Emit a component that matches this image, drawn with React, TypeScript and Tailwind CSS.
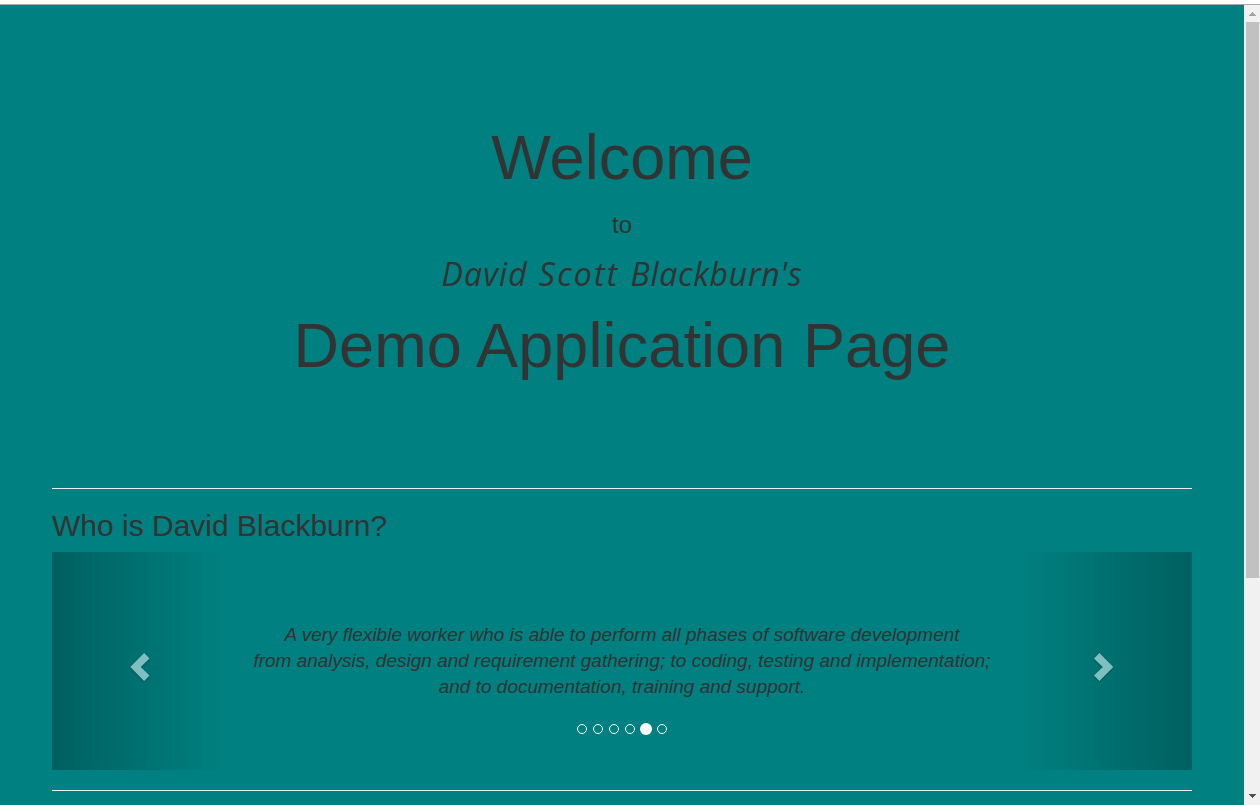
const slides = [0, 1, 2, 3, 4, 5];
const activeSlide = 4;

function Chevron({ flip = false }: { flip?: boolean }) {
  return (
    <svg
      width="20"
      height="28"
      viewBox="0 0 20 28"
      className="overflow-visible drop-shadow-[0_1px_1px_rgba(0,0,0,0.6)]"
    >
      <path
        fill="white"
        d={
          flip
            ? "M5.4 0 L19.3 14 L5.4 28 L0 22.6 L8.8 14 L0 5.4 Z"
            : "M14.1 0 L0.3 14 L14.1 28 L19.5 22.6 L10.7 14 L19.5 5.4 Z"
        }
      />
    </svg>
  );
}

function Scrollbar() {
  return (
    <div className="flex h-full w-4 shrink-0 flex-col items-center bg-[#f1f1f1]">
      <div className="flex h-[17px] w-full items-center justify-center pl-px">
        <svg width="7" height="4" viewBox="0 0 7 4" shapeRendering="crispEdges" className="fill-[#a3a3a3]">
          <path d="M3 0h1v1h1v1h1v1h1v1H0V3h1V2h1V1h1z" />
        </svg>
      </div>
      <div className="ml-px h-[556px] w-[13px] bg-[#c1c1c1]" />
      <div className="mt-auto flex h-[17px] w-full items-center justify-center pb-[2px] pl-px">
        <svg width="7" height="4" viewBox="0 0 7 4" shapeRendering="crispEdges" className="fill-[#505050]">
          <path d="M0 0h7v1H6v1H5v1H4v1H3V3H2V2H1V1H0z" />
        </svg>
      </div>
    </div>
  );
}

export default function App() {
  return (
    <div className="flex h-[805px] w-[1260px] flex-col overflow-hidden bg-white font-['Liberation_Sans',Arial,sans-serif] text-[#333333]">
      <div className="h-[5px] shrink-0 border-b border-[#a9a9a9] bg-white" />
      <div className="flex min-h-0 flex-1">
        <main className="flex-1 overflow-hidden bg-[#008080] px-[52px]">
          <header className="h-[483px] pt-[118px] text-center">
            <h1 className="text-[63px] leading-[69px]">Welcome</h1>
            <h3 className="mt-[20px] text-2xl leading-[26px]">to</h3>
            <h2 className="mt-[14px] flex h-11 justify-center gap-[11px] font-['Open_Sans','Noto_Sans',sans-serif] text-[32px] leading-[44px] italic">
              <span className="tracking-[1.1px]">David</span>
              <span className="tracking-[2.2px]">Scott</span>
              <span className="tracking-[0.7px]">Blackburn's</span>
            </h2>
            <h1 className="mt-[15px] text-[63px] leading-[69px] tracking-[0.1px]">Demo Application Page</h1>
          </header>
          <hr className="h-px border-0 bg-[#eeeeee]" />
          <section>
            <h2 className="mt-5 mb-[10px] text-[30px] leading-[33px]">Who is David Blackburn?</h2>
            <div className="flex h-[218px]">
              <button
                aria-label="Previous"
                className="flex w-[171px] items-center justify-center bg-linear-to-r/srgb from-black/50 to-transparent pt-[11px] pl-[5px] opacity-50"
              >
                <Chevron />
              </button>
              <div className="flex flex-1 flex-col items-center pt-[70px]">
                <p className="text-center text-[19px] leading-[26px] whitespace-nowrap italic">
                  A very flexible worker who is able to perform all phases of software development
                  <br />
                  from analysis, design and requirement gathering; to coding, testing and implementation;
                  <br />
                  and to documentation, training and support.
                </p>
                <div className="mt-[23px] flex h-3 items-center justify-center">
                  {slides.map((slide) => (
                    <span key={slide} className="flex w-4 justify-center">
                      <i
                        className={
                          slide === activeSlide
                            ? "size-3 rounded-full bg-white"
                            : "size-[10px] rounded-full border border-white"
                        }
                      />
                    </span>
                  ))}
                </div>
              </div>
              <button
                aria-label="Next"
                className="flex w-[171px] items-center justify-center bg-linear-to-l/srgb from-black/50 to-transparent pt-[11px] pr-[5px] opacity-50"
              >
                <Chevron flip />
              </button>
            </div>
          </section>
          <hr className="mt-5 h-px border-0 bg-[#eeeeee]" />
        </main>
        <Scrollbar />
      </div>
    </div>
  );
}
